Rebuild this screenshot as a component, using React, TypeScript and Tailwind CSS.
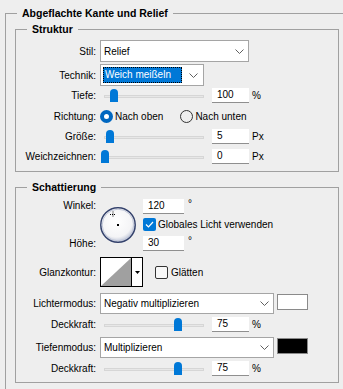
import type { ReactNode } from 'react';

interface GroupBoxProps {
  title: string;
  className?: string;
  children?: ReactNode;
}

interface RowProps {
  label: string;
  className?: string;
  children?: ReactNode;
}

// Etched group box with the caption sitting on the top line
function GroupBox({ title, className = '', children }: GroupBoxProps) {
  return (
    <div className={`border border-[#a0a0a0] ${className}`}>
      <span className="-mt-[9px] ml-[11px] block w-fit whitespace-nowrap bg-[#eeeeee] px-[5px] text-[10.5px] font-bold leading-[16px]">
        {title}
      </span>
      {children}
    </div>
  );
}

function Row({ label, className = '', children }: RowProps) {
  return (
    <div className={`flex items-center ${className}`}>
      <span className="w-[80px] shrink-0 whitespace-nowrap text-right">{label}</span>
      <div className="ml-[4px] flex h-full items-center">{children}</div>
    </div>
  );
}

function Chevron() {
  return (
    <svg width="9" height="5" viewBox="0 0 9 5" className="shrink-0">
      <path d="M0.5 0.5L4.5 4.5L8.5 0.5" fill="none" stroke="#606060" strokeWidth="1" />
    </svg>
  );
}

function Select({ value, className = '' }: { value: string; className?: string }) {
  return (
    <div className={`flex items-center border border-[#a5a5a5] bg-white pl-[3px] pr-[4px] ${className}`}>
      <span className="flex-1 truncate">{value}</span>
      <Chevron />
    </div>
  );
}

function NumberField({ value, className = 'w-[37px]' }: { value: string; className?: string }) {
  return (
    <div className={`flex h-[15px] items-center border-b border-[#8f8f8f] bg-white pl-[5px] leading-[14px] ${className}`}>
      {value}
    </div>
  );
}

// Windows style trackbar: thin track with a blue thumb on top of it
function Slider({ thumb }: { thumb: string }) {
  return (
    <div className="relative h-[15px] w-[104px] shrink-0">
      <div className="absolute left-[4px] right-0 top-[7px] h-[3px] border border-[#d6d6d6] bg-[#e7e7e7]" />
      <div className={`absolute top-[1px] h-[13px] w-[8px] rounded-t-[4px] bg-[#0078d7] ${thumb}`} />
    </div>
  );
}

function Radio({ checked, label }: { checked?: boolean; label: string }) {
  return (
    <div className="flex items-center">
      {checked ? (
        <span className="h-[13px] w-[13px] rounded-full border-[4px] border-[#0067c0] bg-white" />
      ) : (
        <span className="h-[13px] w-[13px] rounded-full border border-[#333333]" />
      )}
      <span className="ml-[2px]">{label}</span>
    </div>
  );
}

function Checkbox({ checked }: { checked?: boolean }) {
  if (checked) {
    return (
      <span className="flex h-[13px] w-[13px] shrink-0 items-center justify-center rounded-[2px] bg-[#0078d7]">
        <svg width="9" height="7" viewBox="0 0 9 7">
          <path d="M1 3.5L3.5 6L8 1" fill="none" stroke="#ffffff" strokeWidth="1.2" />
        </svg>
      </span>
    );
  }
  return <span className="h-[13px] w-[13px] shrink-0 rounded-[2px] border border-[#333333] bg-[#f7f7f7]" />;
}

function AngleDial() {
  return (
    <svg width="36" height="36" viewBox="0 0 36 36" className="shrink-0">
      <defs>
        <radialGradient id="dial" cx="45%" cy="40%" r="60%">
          <stop offset="0" stopColor="#ffffff" />
          <stop offset="0.75" stopColor="#f4f4f6" />
          <stop offset="1" stopColor="#bcc3d6" />
        </radialGradient>
      </defs>
      <circle cx="18" cy="18" r="17.2" fill="url(#dial)" stroke="#34426c" strokeWidth="1.5" />
      <circle cx="18" cy="18" r="15.8" fill="none" stroke="#c3c9da" strokeWidth="1" />
      {/* light direction crosshair */}
      <path d="M10 7.5h6M13 4.5v6" stroke="#000000" strokeWidth="1" strokeDasharray="1 1" />
      <rect x="17" y="17" width="2" height="2" fill="#000000" />
    </svg>
  );
}

function ContourPicker() {
  return (
    <div className="flex h-[30px] w-[43px] shrink-0 border border-black bg-white">
      <svg width="30" height="28" viewBox="0 0 30 28" className="block shrink-0">
        <path d="M0 28L30 0V28Z" fill="#a0a0a0" />
      </svg>
      <div className="flex flex-1 items-center justify-center border-l border-black">
        <svg width="5" height="3" viewBox="0 0 5 3">
          <path d="M0 0H5L2.5 3Z" fill="#000000" />
        </svg>
      </div>
    </div>
  );
}

export default function App() {
  return (
    <div className="h-[389px] w-[343px] overflow-hidden bg-[#eeeeee] pl-[5px] pt-[13px] font-['Liberation_Sans',Arial,sans-serif] text-[10px] leading-[15px] text-black">
      <GroupBox title="Abgeflachte Kante und Relief" className="h-[400px] w-[360px]">
        {/* Struktur */}
        <GroupBox title="Struktur" className="ml-[9px] mt-[8px] h-[143px] w-[324px]">
          <Row label="Stil:" className="mt-[3px] h-[22px]">
            <Select value="Relief" className="h-[22px] w-[149px]" />
          </Row>
          <Row label="Technik:" className="mt-[2px] h-[22px]">
            <div className="flex h-[22px] w-[104px] items-center border border-[#a5a5a5] bg-white pl-[2px] pr-[5px]">
              <span className="mr-[7px] h-[16px] w-[81px] whitespace-nowrap border border-dotted border-black bg-[#0078d7] pl-[1px] leading-[14px] text-white">
                Weich meißeln
              </span>
              <Chevron />
            </div>
          </Row>
          <Row label="Tiefe:" className="mt-[2px] h-[15px]">
            <Slider thumb="left-[10px]" />
            <NumberField value="100" className="ml-[8px] w-[37px]" />
            <span className="ml-[3px] self-start">%</span>
          </Row>
          <Row label="Richtung:" className="mt-[6px] h-[15px]">
            <Radio checked label="Nach oben" />
            <div className="ml-[17px]">
              <Radio label="Nach unten" />
            </div>
          </Row>
          <Row label="Größe:" className="mt-[5px] h-[15px]">
            <Slider thumb="left-[6px]" />
            <NumberField value="5" className="ml-[8px] w-[37px]" />
            <span className="ml-[3px] self-start">Px</span>
          </Row>
          <Row label="Weichzeichnen:" className="mt-[5px] h-[15px]">
            <Slider thumb="left-[1px]" />
            <NumberField value="0" className="ml-[8px] w-[37px]" />
            <span className="ml-[3px] self-start">Px</span>
          </Row>
        </GroupBox>

        {/* Schattierung */}
        <GroupBox title="Schattierung" className="ml-[9px] mt-[15px] h-[196px] w-[324px]">
          <div className="mt-[4px] flex h-[52px]">
            <div className="flex w-[80px] shrink-0 flex-col justify-between text-right leading-[14px]">
              <span>Winkel:</span>
              <span>Höhe:</span>
            </div>
            <div className="ml-[4px] mt-[8px]">
              <AngleDial />
            </div>
            <div className="ml-[7px] flex flex-col">
              <div className="flex">
                <NumberField value="120" className="w-[41px]" />
                <span className="ml-[4px] leading-[10px]">°</span>
              </div>
              <div className="mt-[4px] flex h-[13px] items-center">
                <Checkbox checked />
                <span className="ml-[2px] whitespace-nowrap">Globales Licht verwenden</span>
              </div>
              <div className="mt-[5px] flex">
                <NumberField value="30" className="w-[41px]" />
                <span className="ml-[4px] leading-[10px]">°</span>
              </div>
            </div>
          </div>
          <Row label="Glanzkontur:" className="mt-[6px] h-[30px]">
            <ContourPicker />
            <div className="ml-[12px] flex items-center">
              <Checkbox />
              <span className="ml-[3px]">Glätten</span>
            </div>
          </Row>
          <Row label="Lichtermodus:" className="mt-[6px] h-[21px]">
            <Select value="Negativ multiplizieren" className="h-[21px] w-[174px]" />
            <span className="ml-[3px] mt-[1px] h-[16px] w-[31px] self-start border border-[#8a8a8a] bg-white" />
          </Row>
          <Row label="Deckkraft:" className="mt-[3px] h-[15px]">
            <Slider thumb="left-[74px]" />
            <NumberField value="75" className="ml-[8px] w-[37px]" />
            <span className="ml-[3px] self-start">%</span>
          </Row>
          <Row label="Tiefenmodus:" className="mt-[5px] h-[21px]">
            <Select value="Multiplizieren" className="h-[21px] w-[174px]" />
            <span className="ml-[3px] mt-[1px] h-[16px] w-[31px] self-start border border-[#8a8a8a] bg-black" />
          </Row>
          <Row label="Deckkraft:" className="mt-[3px] h-[15px]">
            <Slider thumb="left-[74px]" />
            <NumberField value="75" className="ml-[8px] w-[37px]" />
            <span className="ml-[3px] self-start">%</span>
          </Row>
        </GroupBox>
      </GroupBox>
    </div>
  );
}
